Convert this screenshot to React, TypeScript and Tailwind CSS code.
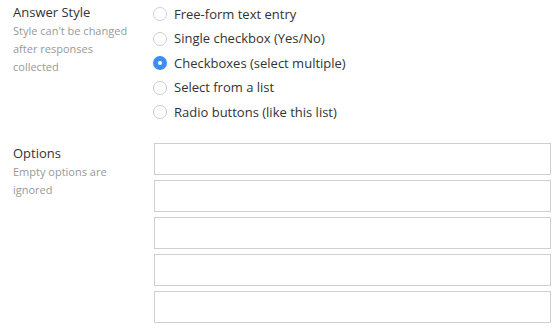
import React, { useState } from 'react';

const styles = [
  'Free-form text entry',
  'Single checkbox (Yes/No)',
  'Checkboxes (select multiple)',
  'Select from a list',
  'Radio buttons (like this list)',
];

const App: React.FC = () => {
  const [selected, setSelected] = useState(2);
  const [options, setOptions] = useState<string[]>(['', '', '', '', '']);

  return (
    <div className="w-[560px] h-[329px] bg-white text-[#333] font-['Open_Sans',sans-serif] pl-[13px] pt-[2px]">
      {/* Answer style */}
      <div className="flex">
        <div className="w-[140px] shrink-0">
          <div className="text-[13px] leading-[20px]">Answer Style</div>
          <p className="text-[11px] leading-[18px] text-[#999] w-[122px]">
            Style can't be changed after responses collected
          </p>
        </div>
        <div className="flex flex-col">
          {styles.map((label, i) => (
            <label
              key={label}
              className="flex items-center h-[24.5px] cursor-pointer"
              onClick={() => setSelected(i)}
            >
              {i === selected ? (
                <span className="w-[14px] h-[14px] rounded-full bg-[#3d8ef0] flex items-center justify-center">
                  <span className="w-[4px] h-[4px] rounded-full bg-white" />
                </span>
              ) : (
                <span className="w-[14px] h-[14px] rounded-full border border-[#cfcfcf] bg-white" />
              )}
              <span className="ml-[7px] text-[13px]">{label}</span>
            </label>
          ))}
        </div>
      </div>

      {/* Options */}
      <div className="flex mt-[18.5px]">
        <div className="w-[141px] shrink-0">
          <div className="text-[13px] leading-[20px]">Options</div>
          <p className="text-[11px] leading-[18px] text-[#999] w-[110px]">Empty options are ignored</p>
        </div>
        <div className="flex flex-col gap-[5px] w-[397px]">
          {options.map((v, i) => (
            <input
              key={i}
              value={v}
              onChange={(e) => setOptions(prev => prev.map((o, j) => (j === i ? e.target.value : o)))}
              className="h-[32px] border border-[#cfcfcf] bg-white px-2 text-[13px] outline-none"
            />
          ))}
        </div>
      </div>
    </div>
  );
};

export default App;
